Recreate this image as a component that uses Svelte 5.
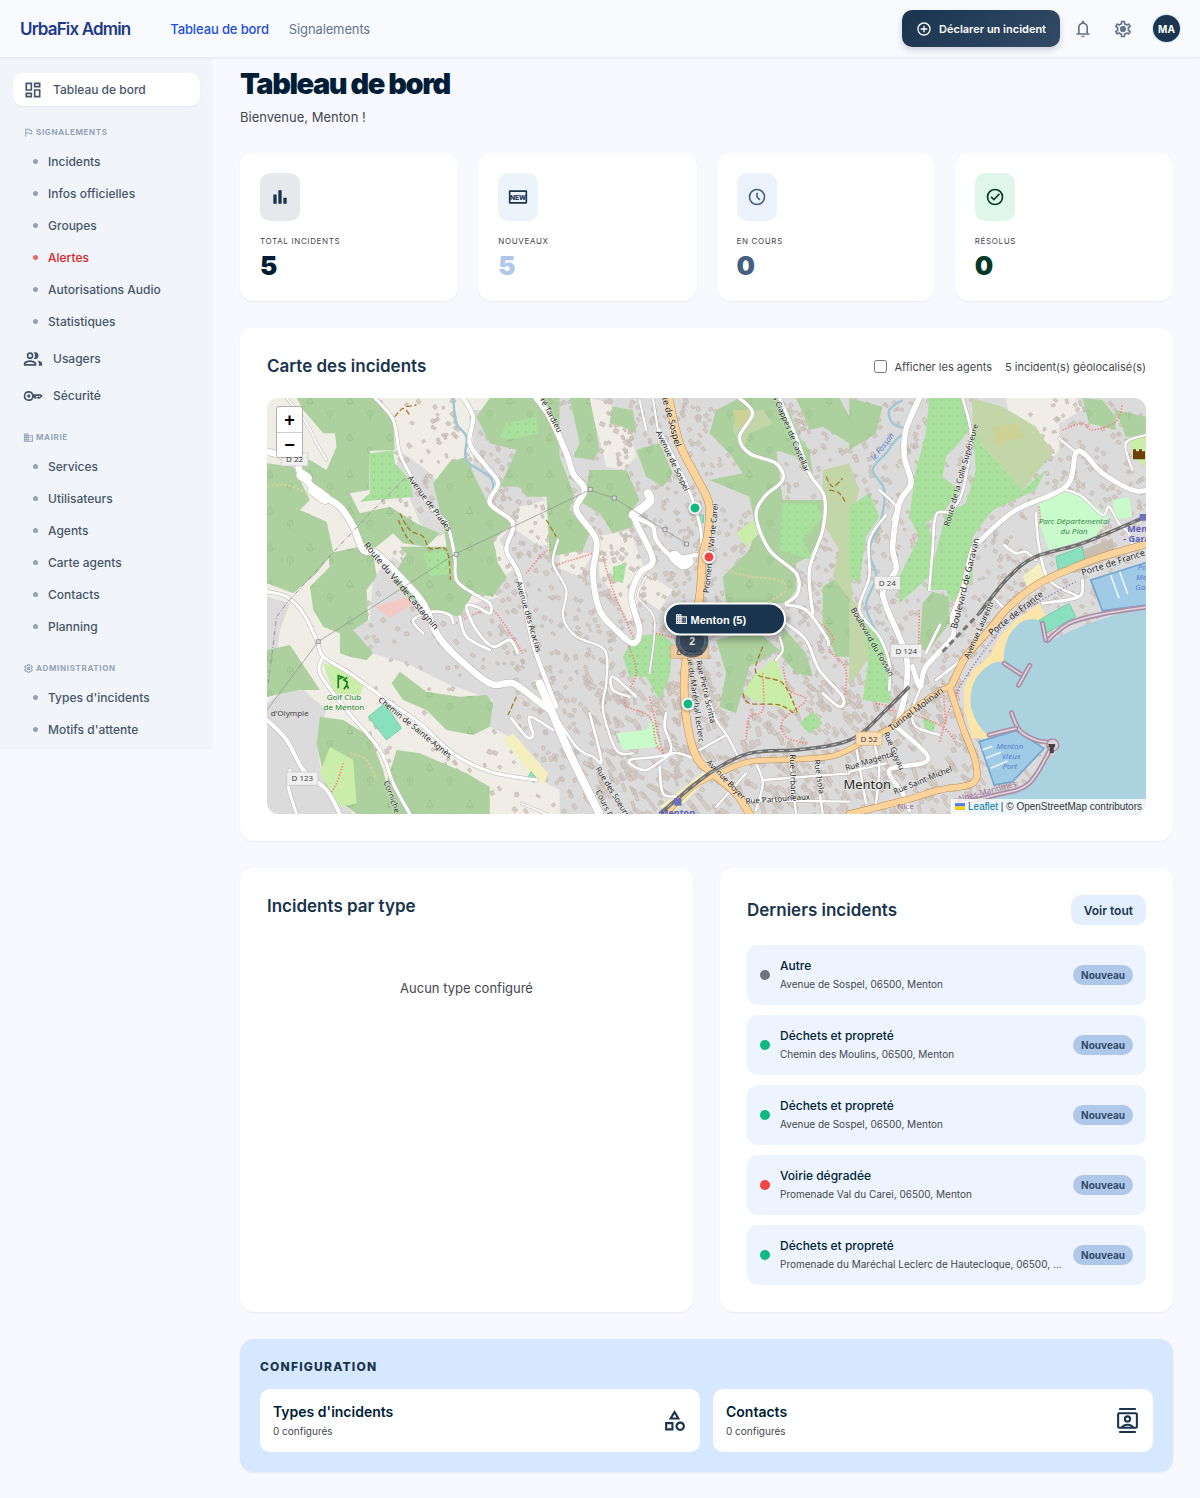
<script>
  const icons = {
    dashboard: 'M19 5v2h-4V5h4M9 5v6H5V5h4m10 8v6h-4v-6h4M9 17v2H5v-2h4M21 3h-8v6h8V3zM11 3H3v10h8V3zm10 8h-8v10h8V11zm-10 4H3v6h8v-6z',
    flag: 'M12.36 6l.4 2H18v6h-3.36l-.4-2H7V6h5.36M14 4H5v17h2v-7h5.6l.4 2h7V6h-5.6L14 4z',
    group: 'M8.500 13.500c-2.500 0-7.500 1.300-7.500 4V20h15v-2.500c0-2.700-5-4-7.500-4zM3 18c.2-1.200 3-2.500 5.500-2.500S13.800 16.800 14 18zM8.500 12a4 4 0 1 0 0-8 4 4 0 0 0 0 8zm0-6a2 2 0 1 1 0 4 2 2 0 0 1 0-4zM16.700 13.800c1.300.9 2.300 2.200 2.300 3.700V20h4v-2.500c0-2.200-3.500-3.400-6.300-3.700zM14.500 12a4 4 0 1 0 0-8c-.5 0-1 .1-1.500.3.900 1 1.400 2.300 1.400 3.700s-.5 2.700-1.400 3.700c.5.200 1 .3 1.500.3z',
    key: 'M7 6a6 6 0 1 0 5.600 8H13l1.600 1.600L16.500 14l2 1.700L20.500 15 23.600 12 21.500 10h-8.900A6 6 0 0 0 7 6zm0 2c1.900 0 3.500 1.300 3.900 4h9.900l.3.100-1.300 1.300-1.300-1.200-2 1.500-1.500-1.700h-4.100A4 4 0 1 1 7 8zm0 2a2 2 0 1 0 0 4 2 2 0 0 0 0-4z',
    building: 'M12 7V3H2v18h20V7H12zM6 19H4v-2h2v2zm0-4H4v-2h2v2zm0-4H4V9h2v2zm0-4H4V5h2v2zm4 12H8v-2h2v2zm0-4H8v-2h2v2zm0-4H8V9h2v2zm0-4H8V5h2v2zm10 12h-8v-2h2v-2h-2v-2h2v-2h-2V9h8v10zm-2-8h-2v2h2v-2zm0 4h-2v2h2v-2z',
    gear: 'M19.43 12.98c.04-.32.07-.64.07-.98 0-.34-.03-.66-.07-.98l2.11-1.65c.19-.15.24-.42.12-.64l-2-3.46c-.09-.16-.26-.25-.44-.25-.06 0-.12.01-.17.03l-2.49 1c-.52-.4-1.08-.73-1.69-.98l-.38-2.65C14.46 2.18 14.25 2 14 2h-4c-.25 0-.46.18-.49.42l-.38 2.65c-.61.25-1.17.59-1.69.98l-2.49-1c-.06-.02-.12-.03-.18-.03-.17 0-.34.09-.43.25l-2 3.46c-.13.22-.07.49.12.64l2.11 1.65c-.04.32-.07.65-.07.98 0 .33.03.66.07.98l-2.11 1.65c-.19.15-.24.42-.12.64l2 3.46c.09.16.26.25.44.25.06 0 .12-.01.17-.03l2.49-1c.52.4 1.08.73 1.69.98l.38 2.65c.03.24.24.42.49.42h4c.25 0 .46-.18.49-.42l.38-2.65c.61-.25 1.17-.59 1.69-.98l2.49 1c.06.02.12.03.18.03.17 0 .34-.09.43-.25l2-3.46c.12-.22.07-.49-.12-.64l-2.11-1.65zm-1.98-1.71c.04.31.05.52.05.73 0 .21-.02.43-.05.73l-.14 1.13.89.7 1.08.84-.7 1.21-1.27-.51-1.04-.42-.9.68c-.43.32-.84.56-1.25.73l-1.06.43-.16 1.13-.2 1.35h-1.4l-.19-1.35-.16-1.13-1.06-.43c-.43-.18-.83-.41-1.23-.71l-.91-.7-1.06.43-1.27.51-.7-1.21 1.08-.84.89-.7-.14-1.13c-.03-.31-.05-.54-.05-.74s.02-.43.05-.73l.14-1.13-.89-.7-1.08-.84.7-1.21 1.27.51 1.04.42.9-.68c.43-.32.84-.56 1.25-.73l1.06-.43.16-1.13.2-1.35h1.39l.19 1.35.16 1.13 1.06.43c.43.18.83.41 1.23.71l.91.7 1.06-.43 1.27-.51.7 1.21-1.07.85-.89.7.14 1.13zM12 8.500a3.500 3.500 0 1 0 0 7 3.500 3.500 0 0 0 0-7z',
    add: 'M13 7h-2v4H7v2h4v4h2v-4h4v-2h-4V7zm-1-5C6.48 2 2 6.48 2 12s4.48 10 10 10 10-4.48 10-10S17.52 2 12 2zm0 18c-4.41 0-8-3.59-8-8s3.59-8 8-8 8 3.59 8 8-3.59 8-8 8z',
    bell: 'M4 19v-2h2v-7q0-2.075 1.25-3.687T10.5 4.2v-.7q0-.625.438-1.062T12 2t1.063.438T13.5 3.5v.7q2 .5 3.25 2.113T18 10v7h2v2zm8 3q-.825 0-1.412-.587T10 20h4q0 .825-.587 1.413T12 22m-4-5h8v-7q0-1.65-1.175-2.825T12 6 9.175 7.175 8 10z',
    bars: 'M4 9h4v11H4zm12 4h4v7h-4zm-6-9h4v16h-4z',
    frame: 'M2 4h20q1 0 1 1v14q0 1-1 1H2q-1 0-1-1V5q0-1 1-1zm1 2v12h18V6z',
    clock: 'M12 2a10 10 0 1 0 0 20 10 10 0 0 0 0-20zm0 2a8 8 0 1 1 0 16 8 8 0 0 1 0-16zm-1 3v5.400l3.800 3.800 1.400-1.400-3.200-3.200V7z',
    check: 'M12 2a10 10 0 1 0 0 20 10 10 0 0 0 0-20zm0 2a8 8 0 1 1 0 16 8 8 0 0 1 0-16zm4.600 3.600L10.600 13.700 8 11.100l-1.400 1.400 4 4L18 9z',
    shapes: 'M12 2l-5.5 9h11L12 2zm0 3.84L13.93 9h-3.87L12 5.84zM17.5 13c-2.49 0-4.5 2.01-4.5 4.5s2.01 4.5 4.5 4.5 4.5-2.01 4.5-4.5-2.01-4.5-4.5-4.5zm0 7c-1.38 0-2.5-1.12-2.5-2.5s1.12-2.5 2.5-2.5 2.5 1.12 2.5 2.5-1.12 2.5-2.5 2.5zM3 21.5h8v-8H3v8zm2-6h4v4H5v-4z',
    contacts: 'M4 0h16v2H4zm0 22h16v2H4zM4 4h16q2 0 2 2v12q0 2-2 2H4q-2 0-2-2V6q0-2 2-2zm0 2v12h1.600q2.400-3 6.400-3t6.400 3H20V6zm4.500 12h7q-1.500-1-3.500-1t-3.500 1zM12 7a3.500 3.500 0 1 1 0 7 3.500 3.500 0 0 1 0-7zm0 2a1.500 1.500 0 1 0 0 3 1.500 1.500 0 0 0 0-3z'
  };

  const signalements = ['Incidents', 'Infos officielles', 'Groupes', 'Alertes', 'Autorisations Audio', 'Statistiques'];
  const mairie = ['Services', 'Utilisateurs', 'Agents', 'Carte agents', 'Contacts', 'Planning'];
  const administration = ["Types d'incidents", "Motifs d'attente"];

  const stats = [
    { label: 'Total incidents', value: 5, icon: 'bars', tone: 'total' },
    { label: 'Nouveaux', value: 5, icon: 'frame', tone: 'fresh' },
    { label: 'En cours', value: 0, icon: 'clock', tone: 'running' },
    { label: 'Résolus', value: 0, icon: 'check', tone: 'solved' }
  ];

  const incidents = [
    { type: 'Autre', place: 'Avenue de Sospel, 06500, Menton', tone: 'grey' },
    { type: 'Déchets et propreté', place: 'Chemin des Moulins, 06500, Menton', tone: 'green' },
    { type: 'Déchets et propreté', place: 'Avenue de Sospel, 06500, Menton', tone: 'green' },
    { type: 'Voirie dégradée', place: 'Promenade Val du Carei, 06500, Menton', tone: 'red' },
    { type: 'Déchets et propreté', place: 'Promenade du Maréchal Leclerc de Hautecloque, 06500, Menton', tone: 'green' }
  ];

  const configs = [
    { title: "Types d'incidents", icon: 'shapes' },
    { title: 'Contacts', icon: 'contacts' }
  ];

  // Map geometry: each entry starts with its column (west, centre, east), followed by points.
  const columns = [0, 870, 1770];
  const parse = (s, col) => s.split(' ').map((p) => {
    const [x, y] = p.split(',').map(Number);
    return [x + columns[col], y];
  });
  const poly = ([col, s]) => 'M' + parse(s, col).map((p) => p.join(' ')).join('L') + 'Z';
  const curve = (col, s) => {
    const p = parse(s, col);
    let d = `M${p[0].join(' ')}`;
    for (let i = 0; i < p.length - 1; i++) {
      const a = p[i - 1] ?? p[i], b = p[i], c = p[i + 1], e = p[i + 2] ?? c;
      d += `C${b[0] + (c[0] - a[0]) / 6} ${b[1] + (c[1] - a[1]) / 6} ${c[0] - (e[0] - b[0]) / 6} ${c[1] - (e[1] - b[1]) / 6} ${c[0]} ${c[1]}`;
    }
    return d;
  };

  let seed = 7;
  const rnd = () => (seed = (seed * 16807) % 2147483647) / 2147483647;
  let buildings = '';
  for (let i = 0; i < 3300; i++) {
    const x = 300 + rnd() * 2360, y = 24 + rnd() * 1248;
    const rural = x < 420 + y * 0.4;
    if (rural && rnd() < 0.7) continue;
    const dense = y > 850 && x > 970;
    const w = (dense ? 12 : 7) + rnd() * (dense ? 24 : 8), h = 6 + rnd() * 7, a = 0.5 + Math.round(rnd() * 2) * 0.4;
    const cx = Math.cos(a) * w, sx = Math.sin(a) * w, cy = -Math.sin(a) * h, sy = Math.cos(a) * h;
    buildings += `M${x.toFixed(0)} ${y.toFixed(0)}l${cx.toFixed(0)} ${sx.toFixed(0)}l${cy.toFixed(0)} ${sy.toFixed(0)}l${(-cx).toFixed(0)} ${(-sx).toFixed(0)}Z`;
  }

  const land = [
    [0, '21,24 900,24 900,460 840,470 760,540 720,620 560,660 440,760 560,880 700,930 690,1010 750,1040 860,1180 900,1200 900,1272 21,1272'],
    [1, '120,24 185,40 180,100 240,120 260,200 220,240 170,230 150,150 130,80'],
    [1, '140,440 240,420 290,550 370,600 330,660 270,620 240,700 200,620 150,560'],
    [1, '0,480 130,490 90,560 20,530'],
    [2, '470,24 680,24 700,60 630,100 630,180 600,220 560,160 480,80']
  ];
  const town = [
    [0, '340,560 400,500 480,560 560,660 600,690 700,700 720,620 690,590 760,540 720,450 760,400 700,400 690,340 620,290 640,230 700,240 720,290 800,290 860,330 780,350 770,420 840,470 900,450 900,1200 870,1180 750,1030 690,1000 700,930 640,900 560,880 520,860 440,820 300,780 280,710 330,690'],
    [0, '430,190 500,240 560,300 590,400 540,440 480,400 440,300 400,240'],
    [0, '21,940 60,910 130,900 200,960 170,1040 180,1130 280,1272 21,1272'],
    [0, '21,620 90,640 60,720 40,860 21,880'],
    [0, '640,60 700,60 690,160 770,180 720,290 640,250']
  ];
  const woods = [
    [0, '110,24 345,24 400,95 405,180 330,182 328,300 270,310 300,370 390,350 470,400 540,430 500,470 430,460 400,430 350,470 300,490 320,470 280,410 240,350 180,320 130,240 60,200 150,210 200,240 230,170 225,130 190,130 130,60'],
    [0, '21,220 100,230 120,270 150,330 120,360 200,395 220,485 170,550 100,610 21,580'],
    [0, '205,490 300,470 340,490 350,560 320,600 325,690 280,720 340,790 320,810 270,800 240,790 240,730 190,710 160,660 150,590 210,530'],
    [0, '21,780 90,765 180,900 120,900 21,920'],
    [0, '570,215 620,200 640,250 690,350 760,400 700,450 715,520 740,560 700,620 640,610 600,680 500,660 430,610 400,560 440,490 420,470 560,470 550,400 520,280'],
    [0, '690,24 900,24 900,320 800,320 780,290 720,290 770,180 690,160 650,80'],
    [0, '420,845 500,905 600,920 680,915 700,940 690,1010 640,1035 560,1020 500,960 430,930 395,880'],
    [0, '410,1080 480,1090 620,1150 690,1190 690,1272 400,1272 380,1180'],
    [0, '180,980 250,990 330,1040 370,1140 400,1272 290,1272 200,1200 170,1060'],
    [1, '60,24 120,24 140,120 150,180 130,210 70,200 90,160'],
    [1, '190,50 250,60 260,130 220,110 180,100'],
    [1, '-20,120 30,200 75,320 60,360 120,430 100,480 0,500'],
    [1, '120,240 230,240 270,330 240,370 250,410 190,430 150,370 100,340'],
    [1, '260,180 330,160 370,250 340,290 290,260'],
    [1, '500,60 570,24 690,24 720,70 740,140 780,180 790,250 780,260 740,200 680,180 700,330 820,330 820,420 780,500 740,520 740,600 710,640 620,640 530,640 520,560 600,480 620,420 600,320 480,270 580,250 540,190 480,130'],
    [1, '740,24 870,24 910,100 900,160 820,110 780,120 760,70'],
    [1, '820,590 870,560 910,640 900,800 860,800 820,700'],
    [1, '500,750 620,720 690,780 600,830 560,970 510,950 530,850'],
    [1, '700,710 770,790 790,860 740,850 690,790'],
    [2, '0,24 100,50 80,130 0,180'],
    [2, '220,640 250,605 300,620 300,700 240,780 210,780'],
    [2, '700,24 760,30 800,80 800,120 720,100'],
    [2, '800,60 890,80 890,140 830,140']
  ];
  const scrub = [
    [1, '560,70 640,60 670,100 600,130 580,180 550,120'],
    [1, '820,240 900,220 930,300 900,420 910,640 850,560 870,480 820,400'],
    [2, '370,24 460,50 560,110 610,190 520,300 400,170 370,110'],
    [2, '0,620 30,650 60,800 20,860 0,880']
  ];
  const meadow = [
    [2, '430,110 500,100 530,140 440,165'],
    [1, '550,60 600,60 600,110 560,110']
  ];
  const orchard = [
    [0, '330,190 400,180 405,220 450,270 460,320 300,335 330,310'],
    [0, '490,490 560,480 575,550 510,560'],
    [0, '740,100 830,80 835,130 740,150 720,140'],
    [1, '220,800 250,740 330,730 370,760 360,860 330,930 290,860 240,860'],
    [1, '700,340 800,340 820,380 760,450 790,510 690,480'],
    [1, '690,80 720,60 750,140 780,180 720,150'],
    [1, '750,1000 790,965 820,1000 780,1030'],
    [1, '190,530 230,520 220,580 190,570'],
    [2, '240,24 340,24 360,120 320,170 290,200 280,260 330,300 280,370 230,400 250,440 240,560 150,640 150,560 210,440 180,380 200,240 230,130'],
    [2, '370,110 400,170 520,300 590,240 560,300 430,360 370,440 370,570 310,640 290,600 230,600 270,450 290,370 350,340 380,240'],
    [2, '0,350 60,310 90,380 50,440 30,580 0,560'],
    [2, '30,660 90,740 130,860 120,940 40,930 60,800'],
    [2, '220,980 260,1000 250,1030 225,1010']
  ];
  const parks = [
    [2, '570,340 660,300 720,330 780,380 740,440 600,480 570,400'],
    [2, '790,330 840,320 850,380 800,390'],
    [1, '200,1030 290,1020 310,980 330,1070 220,1080']
  ];
  const gardens = [
    [0, '190,820 270,840 310,890 300,915 220,910'],
    [0, '210,1070 280,1110 290,1240 240,1250 180,1150'],
    [1, '620,850 680,800 700,860 750,970 610,930 580,910'],
    [1, '560,430 610,390 630,430 590,470'],
    [2, '840,150 890,140 890,230 850,200']
  ];
  const pitches = [
    [0, '375,940 425,1015 380,1050 325,980'],
    [0, '815,1145 830,1165 822,1178 805,1160'],
    [1, '450,375 462,375 462,398 450,398'],
    [2, '620,500 700,470 710,530 630,560'],
    [2, '570,690 660,640 680,680 590,730']
  ];
  const schools = [
    [0, '730,1050 760,1030 865,1150 855,1180 830,1170'],
    [0, '825,870 862,865 872,920 845,928'],
    [1, '330,1250 470,1140 490,1150 370,1272'],
    [2, '520,560 570,520 600,560 540,600']
  ];
  const sand = [[2, '570,640 500,690 450,740 420,800 370,840 345,890 345,960 370,1045 420,1045 410,1000 400,900 480,830 480,750 520,700 600,700']];
  const sea = 'M2700 648C2560 665 2430 720 2365 758Q2350 730 2345 692Q2290 672 2250 735Q2230 780 2234 815Q2190 810 2150 865Q2130 900 2135 950Q2150 1010 2190 1038L2270 1018L2330 1052L2385 1060L2395 1080L2300 1190L2120 1240V1290H2700Z';

  const streams = [
    curve(0, '580,24 590,100 620,140 620,210 690,260 700,300 690,340 755,390'),
    curve(2, '160,30 120,60 130,100 170,120 140,150 110,190 70,240 105,300 95,390 60,480 80,560 50,650 90,740')
  ];
  const roads = [
    [6, 0, '80,24 140,100 170,160 200,210'],
    [20, 0, '21,185 60,195 110,220 125,255 180,310 240,350 280,410 310,480 350,490 430,570 490,640 530,730 580,790 690,880 760,880 830,930 870,960'],
    [32, 0, '125,255 140,265'],
    [34, 0, '160,300 195,325'],
    [9, 0, '345,24 400,90 420,190 455,260 510,350 560,400 585,500 590,570 640,610 690,640 690,670 650,650 620,650 650,720 700,770 750,750 775,790'],
    [13, 0, '610,24 640,80 630,160 680,230 715,280 690,340 760,400 740,480 780,560 820,760 890,950'],
    [10, 0, '21,605 80,620 130,670 170,750 190,800 270,850 380,930 480,1000 580,1090 690,1145 830,1170'],
    [10, 0, '190,800 180,850 260,960 360,1080 400,1180 450,1272'],
    [12, 0, '21,990 80,1050 130,1140 200,1200 240,1272'],
    [9, 0, '90,1140 85,1190 110,1272'],
    [8, 0, '490,730 460,690 520,665 570,675 580,700'],
    [9, 0, '600,680 620,740 690,780'],
    [9, 0, '755,985 800,1040 820,1035 810,980 880,1020'],
    [6, 0, '785,1240 860,1272'],
    [18, 1, '-40,24 0,80 50,190 70,250 105,300 80,360 140,450 130,550 150,660 200,720 250,760 270,720 245,620 270,550 310,510 265,410 250,375'],
    [26, 1, '250,375 300,335 295,310'],
    [13, 1, '265,385 310,410 320,450 370,500 440,495'],
    [36, 1, '375,500 400,520 415,515'],
    [7, 1, '25,450 10,520 50,600 40,680 80,740 165,780 170,880 160,960 200,1080 250,1090'],
    [6, 1, '270,30 290,120'],
    [6, 1, '310,24 325,120'],
    [5, 1, '290,560 265,620 315,690 300,850'],
    [9, 1, '330,120 410,280 450,400 458,480'],
    [10, 1, '570,24 610,70 570,140 600,190 680,220 700,270 645,320 620,380 660,480 740,550 745,610 710,640'],
    [10, 1, '690,24 740,140 780,250 825,320 820,420 780,540 790,670'],
    [9, 1, '710,645 770,660 830,740 838,765'],
    [9, 1, '710,700 770,750 810,840 880,920 870,950 820,910'],
    [7, 1, '690,740 700,780 680,810'],
    [24, 1, '-30,880 0,950 60,1090 150,1272'],
    [8, 1, '0,950 80,1070 130,1100 155,1110 120,970'],
    [8, 1, '260,920 190,860 190,900 240,920'],
    [8, 1, '350,970 345,1010 360,1090 240,1110 290,1140 370,1090 430,1105'],
    [8, 1, '330,1130 340,1210 380,1220'],
    [7, 1, '470,900 500,990 535,1040 565,1100'],
    [7, 1, '450,1080 530,1035'],
    [7, 1, '620,1120 640,1180 620,1260'],
    [7, 1, '720,1100 740,1272'],
    [7, 1, '795,1100 820,1272'],
    [7, 1, '600,1230 900,1235'],
    [7, 1, '500,1250 590,1150'],
    [7, 1, '640,1170 900,1150'],
    [17, 2, '210,24 170,120 165,200 185,280 150,340 130,470 140,540 100,610 150,740 172,800 170,900 145,1000'],
    [15, 2, '190,830 212,890 230,830 310,740 310,680 340,600 370,480 400,445 500,360 650,290 680,190 710,195 760,250 850,300 900,300'],
    [8, 2, '340,24 365,130 350,260 330,330 300,365 260,375 250,480 240,600'],
    [8, 2, '90,300 140,350 130,390'],
    [8, 2, '110,375 60,450 60,560 30,660 90,740 120,820 120,900'],
    [7, 2, '650,300 700,320 760,375 780,350 810,400 840,430 850,470'],
    [8, 2, '560,370 570,470 600,570 690,620'],
    [8, 2, '465,465 500,490 530,485 560,510'],
    [8, 2, '430,620 470,660'],
    [8, 2, '260,870 350,800'],
    [8, 2, '272,705 230,790'],
    [7, 2, '215,890 190,960 200,1010 270,1035'],
    [13, 2, '140,1010 230,1090 220,1120 120,1140 160,1210 180,1260'],
    [7, 2, '20,1070 50,1240'],
    [7, 2, '75,1060 90,1140 80,1240'],
    [7, 2, '0,1145 110,1120'],
    [9, 2, '580,640 690,620 700,570'],
    [7, 2, '630,145 685,190'],
    [7, 2, '890,135 830,160 850,240']
  ].map(([w, c, s]) => ({ w, d: curve(c, s) }));
  const mains = [
    [22, 1, '358,24 390,160 440,260 478,340 475,430 460,500 450,620 425,740 405,850 410,980 440,1100 490,1150 560,1210 600,1272'],
    [15, 1, '350,1272 430,1190 520,1145 600,1115 730,1108 850,1098 930,1062 1020,1015 1090,960 1170,905 1210,885'],
    [20, 2, '310,880 350,800 420,720 480,650 570,580 680,530 760,500 900,460'],
    [18, 2, '300,890 340,1010 380,1120 370,1180 270,1200 170,1230 0,1272']
  ].map(([w, c, s]) => ({ w, d: curve(c, s) }));
  const rails = [
    curve(1, '330,1272 480,1150 600,1090 740,1080 850,1065 930,1035 1010,960 1080,890'),
    curve(2, '390,670 480,560 560,500 700,460 890,380')
  ];
  const footways = [
    [1, '20,525 130,490'], [1, '235,760 260,850 225,940 300,980 320,1060 350,1100'],
    [1, '160,500 190,600 250,740'], [1, '640,850 640,960 600,980 590,1050'], [1, '700,830 720,900 770,930 700,990 710,1040 770,1060'],
    [1, '790,680 850,740 840,780 890,840 880,960'], [0, '590,700 650,670 700,660 790,790'], [0, '800,550 850,490 870,480'],
    [2, '640,120 700,100 730,120 800,95 820,45'], [2, '210,660 208,780'], [2, '120,960 180,970 280,1010 320,1060'], [2, '570,350 575,400'],
    [0, '250,1120 230,1180 205,1220'], [2, '80,940 130,950'], [1, '320,730 380,745'], [2, '330,900 300,960 270,1060'],
    [2, '280,880 290,1000'], [1, '300,920 340,1090']
  ].map(([c, s]) => curve(c, s));
  const tracks = [
    [0, '405,80 430,55 450,75'], [0, '440,50 470,45'], [0, '420,370 450,420 490,440 510,475 560,480 572,570'], [0, '415,390 440,440 465,465'],
    [1, '580,910 600,940 690,945 740,975'], [1, '640,770 620,850 700,880 745,970'], [1, '830,260 850,290 880,265'], [1, '840,300 870,310 890,340'], [0, '770,920 745,975'], [0, '860,390 890,440']
  ].map(([c, s]) => curve(c, s));
  const piers = [
    curve(2, '900,650 760,672 660,700 595,752'),
    curve(2, '465,820 520,856'),
    curve(2, '542,826 508,886'),
    curve(2, '487,968 512,1022 560,1050 610,1058'),
    curve(2, '612,1062 540,1180 440,1215 330,1240'),
    curve(2, '590,750 580,700'),
    curve(2, '420,1035 500,1015')
  ];

  // column, x, y, rotation, text
  const labels = [
    [0, 510, 340, 53, 'Avenue de Prades'],
    [0, 424, 588, 50, 'Route du Val de Castagnin', 'l'],
    [0, 808, 680, 74, 'Avenue des Acacias'],
    [0, 466, 1012, 39, 'Chemin de Sainte-Agnès'],
    [0, 400, 1230, 70, 'Corniche d'],
    [0, 875, 75, 62, 'ré Tardieu'],
    [1, 366, 95, 75, 'te de Sospel', 'l'],
    [1, 370, 212, 64, 'Avenue de Sospel'],
    [1, 724, 125, 67, 'es Ciappes de Castellar'],
    [1, 483, 475, -84, 'Promenade Val de Carei'],
    [1, 438, 920, 82, 'Rue du Maréchal Leclerc'],
    [1, 470, 905, 77, 'Rue Pietra Scritta'],
    [1, 530, 1168, 46, 'Avenue Boyer'],
    [1, 190, 1205, 58, 'Rue des Soeurs'],
    [1, 165, 1240, 64, 'Cours R'],
    [1, 732, 1160, 88, 'Rue Urbana'],
    [1, 810, 1160, 82, 'Rue Isola'],
    [1, 685, 1226, -4, 'Rue Partouneaux'],
    [2, 335, 255, -74, 'Route de la Colle Supérieure'],
    [2, 348, 580, -76, 'Boulevard de Garavan', 'l'],
    [2, 388, 720, -66, 'Avenue Laurenti'],
    [2, 500, 670, -38, 'Porte de France', 'l'],
    [2, 792, 518, -18, 'Porte de France', 'l'],
    [2, 70, 755, 60, 'Boulevard du Fossan'],
    [2, 200, 958, -37, 'Tunnel Molinari', 'l'],
    [2, 135, 1082, 66, 'Rue Guyau'],
    [2, 60, 1112, -17, 'Rue Magenta'],
    [2, 220, 1170, -22, 'Rue Saint-Michel']
  ];
  const shields = [
    [0, 104, 208, 'D 22', 80], [0, 127, 1166, 'D 123', 94], [2, 114, 579, 'D 24', 78], [2, 171, 783, 'D 124', 94]
  ];
  const markers = [
    { x: 1307, y: 353, tone: 'green' },
    { x: 1350, y: 500, tone: 'red' },
    { x: 1284, y: 943, tone: 'green' }
  ];
  const place = (x, y) => `left:${((x - 21) / 26.4).toFixed(2)}%;top:${((y - 24) / 12.48).toFixed(2)}%`;

  let showAgents = $state(false);
</script>

{#snippet icon(name)}
  <svg class="icon" viewBox="0 0 24 24" aria-hidden="true">
    <path fill-rule="evenodd" d={icons[name]} />
    {#if name === 'gear'}<circle cx="12" cy="12" r="3.500" opacity="0.800" />{/if}
    {#if name === 'frame'}<text class="new" x="12" y="15" text-anchor="middle">NEW</text>{/if}
  </svg>
{/snippet}

{#snippet group(title, iconName, items)}
  <section class="group">
    <h2>{@render icon(iconName)}{title}</h2>
    <ul>
      {#each items as item}
        <li><a href="#top" class:alert={item === 'Alertes'}>{item}</a></li>
      {/each}
    </ul>
  </section>
{/snippet}

<header class="topbar">
  <a class="brand" href="#top">UrbaFix Admin</a>
  <nav>
    <a class="current" href="#top">Tableau de bord</a>
    <a href="#top">Signalements</a>
  </nav>
  <button class="declare">{@render icon('add')}Déclarer un incident</button>
  <button class="tool" aria-label="Notifications">{@render icon('bell')}</button>
  <button class="tool" aria-label="Paramètres">{@render icon('gear')}</button>
  <button class="avatar" aria-label="Compte MA">MA</button>
</header>

<div class="shell" id="top">
  <aside>
    <a class="entry active" href="#top">{@render icon('dashboard')}Tableau de bord</a>
    {@render group('Signalements', 'flag', signalements)}
    <div class="entries">
      <a class="entry" href="#top">{@render icon('group')}Usagers</a>
      <a class="entry" href="#top">{@render icon('key')}Sécurité</a>
    </div>
    {@render group('Mairie', 'building', mairie)}
    {@render group('Administration', 'gear', administration)}
  </aside>

  <main>
    <div class="intro">
      <h1>Tableau de bord</h1>
      <p>Bienvenue, Menton !</p>
    </div>

    <div class="stats">
      {#each stats as stat}
        <article class="card stat {stat.tone}">
          <span class="badge">{@render icon(stat.icon)}</span>
          <p>{stat.label}</p>
          <strong>{stat.value}</strong>
        </article>
      {/each}
    </div>

    <section class="card panel">
      <div class="panel-head">
        <h2>Carte des incidents</h2>
        <div class="map-tools">
          <label><input type="checkbox" bind:checked={showAgents} />Afficher les agents</label>
          <span>5 incident(s) géolocalisé(s)</span>
        </div>
      </div>

      <div class="map">
        <svg class="tiles" viewBox="21 24 2640 1248" preserveAspectRatio="none" role="img" aria-label="Carte de Menton">
          <defs>
            <pattern id="trees" width="120" height="110" patternUnits="userSpaceOnUse">
              <path d="M30 20l-9 20h18zM30 40v8M86 78a8 9 0 1 1 8 0M90 68v20" fill="none" stroke="#8fb981" stroke-width="2" />
            </pattern>
            <pattern id="dots" width="24" height="24" patternUnits="userSpaceOnUse">
              <circle cx="6" cy="6" r="2" fill="#77bd6d" /><circle cx="18" cy="18" r="1" fill="#77bd6d" />
            </pattern>
          </defs>
          <rect x="0" y="0" width="2700" height="1300" fill="#dcdbdb" />
          {#each land as p}<path d={poly(p)} fill="#f0ede6" />{/each}
          {#each town as p}<path d={poly(p)} fill="#dcdbdb" />{/each}
          <path d={buildings} fill="#d5ccc6" stroke="#c0b5ae" stroke-width="2" />
          {#each woods as p}<path d={poly(p)} fill="#add19e" /><path d={poly(p)} fill="url(#trees)" />{/each}
          {#each scrub as p}<path d={poly(p)} fill="#c3d6a7" />{/each}
          {#each meadow as p}<path d={poly(p)} fill="#cdd196" />{/each}
          {#each orchard as p}<path d={poly(p)} fill="#aae09d" /><path d={poly(p)} fill="url(#dots)" />{/each}
          {#each parks as p}<path d={poly(p)} fill="#c8facc" />{/each}
          {#each gardens as p}<path d={poly(p)} fill="#cbedaa" />{/each}
          {#each schools as p}<path d={poly(p)} fill="#f3efbf" />{/each}
          <path d="M345 650L440 620L460 640L390 685Z" fill="#f3c9c6" />
          <path d="M2470 480L2560 445L2570 500L2485 530Z" fill="#c8beb2" />
          {#each sand as p}<path d={poly(p)} fill="#fbe5a8" />{/each}
          <path d={sea} fill="#aad3df" />
          <path d="M2160 1055L2270 1022L2355 1075L2260 1175L2205 1185Z" fill="#9fcbe6" stroke="#74a5cf" stroke-width="5" />
          <path d="M2495 570L2670 515V645L2530 662Z" fill="#9fcbe6" stroke="#74a5cf" stroke-width="5" />
          <path d="M2555 555L2580 625M2582 545L2606 612M2170 1080l30 -12M2180 1105l45 -18M2195 1135l50 -22" stroke="#eef3f6" stroke-width="5" />
          {#each pitches as p}<path d={poly(p)} fill="#88e0be" stroke="#63c29c" stroke-width="2" />{/each}
          {#each streams as d}<path {d} fill="none" stroke="#9cc7d6" stroke-width="7" />{/each}
          <path d={curve(0, '21,290 80,285 140,310')} class="path-yellow" />
          <path d={curve(1, '530,540 600,560 690,570 710,600 650,640')} class="path-yellow" />
          <path d={curve(0, '270,1090 320,1110 350,1170')} class="path-yellow" />
          {#each footways as d}<path {d} class="footway" />{/each}
          {#each tracks as d}<path {d} class="track" />{/each}
          {#each roads as r}<path d={r.d} class="line" stroke="#b9b4b1" stroke-width={r.w + 3} />{/each}
          {#each roads as r}<path d={r.d} class="line" stroke="#fff" stroke-width={r.w} />{/each}
          {#each mains as r}<path d={r.d} class="line" stroke="#b98a4c" stroke-width={r.w + 3} />{/each}
          {#each mains as r}<path d={r.d} class="line" stroke="#fbd39b" stroke-width={r.w} />{/each}
          {#each rails as d}
            <path {d} class="rail" />
            <path {d} class="ties" />
          {/each}
          <path d="M2050 785L2160 670" class="tunnel" />
          <path d={curve(2, '320,910 370,830 430,750 480,690 560,640 680,575')} class="border" />
          {#each piers as d}<path {d} class="line" stroke="#ab8da8" stroke-width="15" /><path {d} class="line" stroke="#ddd5da" stroke-width="5" />{/each}
          <circle cx="2381" cy="1065" r="18" fill="#ddd5da" stroke="#ab8da8" stroke-width="5" />
          <path d="M2368 1062h20v10h-4v18h-12v-18h-4z" fill="#444" />
          <path d="M21 960L175 755L590 490L870 358L990 300L1065 325L1215 420L1280 460" fill="none" stroke="#8e8e8e" stroke-width="2" />
          <path d="M169 749h12v12h-12zM583 487h12v12h-12zM986 292h12v12h-12zM1058 318h12v12h-12zM1210 413h12v12h-12zM1275 456h12v12h-12z" fill="#ddd" stroke="#777" stroke-width="2" />
          <path d="M25 880L50 680L80 640L180 530L330 370L440 260" fill="none" stroke="#a48ba5" stroke-width="3" stroke-dasharray="14 6 3 6" />
          <path d="M235 895v-38l14 5-14 6M262 862l-10 8 10 6-2 10-8 12M260 884l6 12" fill="none" stroke="#14831d" stroke-width="5" />
          <path d="M2622 178h9v6h9v-6h9v6h9v24h-36z" fill="#6f3f08" />

          {#each labels as [c, x, y, r, t, size]}
            <text class="road {size ?? ''}" transform="translate({x + columns[c]} {y}) rotate({r})" y="9">{t}</text>
          {/each}
          {#each shields as [c, x, y, t, w]}
            <rect x={x + columns[c] - w / 2} y={y - 20} width={w} height="40" rx="3" fill="#efefef" stroke="#c1c1c1" stroke-width="2" />
            <text class="shield" x={x + columns[c]} y={y + 8}>{t}</text>
          {/each}
          <rect x="1790" y="1026" width="78" height="40" rx="3" fill="#fbdcb4" stroke="#d9ac75" stroke-width="2" />
          <text class="shield" x="1829" y="1055">D 52</text>
          <rect x="1233" y="765" width="114" height="40" rx="3" fill="#ecc9a0" stroke="#d9ac75" stroke-width="2" />
          <text class="shield" x="1290" y="795">D 2566</text>
          <text class="golf" x="252" y="930">Golf Club</text>
          <text class="golf" x="252" y="960">de Menton</text>
          <text class="village" x="89" y="977">d'Olympie</text>
          <text class="parc" x="2445" y="401">Parc Départemental</text>
          <text class="parc" x="2445" y="431">du Pian</text>
          <text class="port" x="2252" y="1078">Menton</text>
          <text class="port" x="2256" y="1108">Vieux</text>
          <text class="port" x="2252" y="1138">Port</text>
          <text class="port start" x="2636" y="540">Port</text>
          <text class="port start" x="2631" y="570">Menton</text>
          <text class="port start" x="2629" y="600">Garavan</text>
          <text class="port" transform="translate(1876 175) rotate(-52)">le Fossan</text>
          <text class="station start" x="2605" y="427">Menton</text>
          <text class="station start" x="2593" y="456">- Garavan</text>
          <rect x="2642" y="372" width="20" height="20" fill="#6a6fc0" />
          <rect x="1244" y="1225" width="22" height="22" fill="#6a6fc0" />
          <text class="station" x="1254" y="1278">Menton</text>
          <text class="city" x="1824" y="1196">Menton</text>
          <text class="region" x="1939" y="1258">Nice</text>
          <text class="region" transform="translate(2185 1212) rotate(-15)">Alpes-Maritimes</text>
        </svg>

        <span class="cluster" style={place(1298, 752)}>2</span>
        {#each markers as m}<span class="marker {m.tone}" style={place(m.x, m.y)}></span>{/each}
        <button class="pill" style={place(1395, 688)}>{@render icon('building')}Menton (5)</button>
        <div class="zoom">
          <button aria-label="Zoom avant">+</button>
          <button aria-label="Zoom arrière">−</button>
        </div>
        <div class="credit">
          <svg viewBox="0 0 12 8" aria-hidden="true"><path fill="#4c7be1" d="M0 0h12v4H0z" /><path fill="#ffd500" d="M0 4h12v3H0z" /><path fill="#e0bc00" d="M0 7h12v1H0z" /></svg>
          <a href="#top">Leaflet</a> | © OpenStreetMap contributors
        </div>
      </div>
    </section>

    <div class="pair">
      <section class="card panel">
        <h2>Incidents par type</h2>
        <p class="empty">Aucun type configuré</p>
      </section>

      <section class="card panel">
        <div class="panel-head latest">
          <h2>Derniers incidents</h2>
          <button class="all">Voir tout</button>
        </div>
        <ul class="incidents">
          {#each incidents as incident}
            <li>
              <span class="dot {incident.tone}"></span>
              <div class="what">
                <h3>{incident.type}</h3>
                <p>{incident.place}</p>
              </div>
              <span class="status">Nouveau</span>
            </li>
          {/each}
        </ul>
      </section>
    </div>

    <section class="config">
      <h2>Configuration</h2>
      <div class="config-grid">
        {#each configs as c}
          <a href="#top">
            <div>
              <h3>{c.title}</h3>
              <p>0 configurés</p>
            </div>
            {@render icon(c.icon)}
          </a>
        {/each}
      </div>
    </section>
  </main>
</div>

<style>
  :global(body) {
    background: #f8f9ff;
    color: #43474d;
    font-family: Inter, 'Liberation Sans', sans-serif;
    font-size: 12px;
  }
  * { box-sizing: border-box; }
  h1, h2, h3, p, ul { margin: 0; padding: 0; }
  ul { list-style: none; }
  a { color: inherit; text-decoration: none; }
  button { border: 0; padding: 0; background: none; color: inherit; font: inherit; cursor: pointer; }
  .icon { display: block; flex: none; width: 20px; height: 20px; fill: currentColor; }
  .new { font: 800 8px Inter, sans-serif; }

  .topbar {
    display: flex;
    align-items: center;
    height: 57px;
    padding: 0 20px;
    background: #f9fafe;
    box-shadow: 0 1px 2px rgb(15 23 42 / 8%);
    position: relative;
  }
  .brand { color: #1e3a8a; font-size: 17px; font-weight: 600; letter-spacing: -0.05em; }
  nav { display: flex; flex: 1; gap: 20px; margin-left: 40px; color: #64748b; font-size: 13px; letter-spacing: -0.01em; }
  .current { color: #1d4ed8; font-weight: 500; }
  .declare {
    display: flex;
    align-items: center;
    gap: 7px;
    height: 37px;
    padding: 0 14px;
    border-radius: 10px;
    background: linear-gradient(135deg, #1a344e, #334a66);
    box-shadow: 0 3px 6px rgb(15 23 42 / 18%);
    color: #fff;
    font-size: 11px;
    font-weight: 600;
  }
  .declare .icon { width: 16px; height: 16px; }
  .tool { display: grid; place-items: center; width: 40px; height: 36px; color: #64748b; }
  .tool + .tool { margin-right: 10px; }
  .declare + .tool { margin-left: 3px; }
  .avatar { width: 27px; height: 27px; border-radius: 50%; background: #1d3650; box-shadow: 0 0 0 1px #d5e6fb; color: #fff; font-size: 10px; font-weight: 700; }

  .shell { display: flex; align-items: flex-start; }
  aside { flex: none; width: 213px; padding: 16px 13px 4px; background: #f1f5f9; color: #475569; font-weight: 500; }
  .entry { display: flex; align-items: center; gap: 10px; height: 37px; padding: 0 10px; }
  .entry.active { height: 33px; border-radius: 10px; background: #fff; box-shadow: 0 1px 2px rgb(15 23 42 / 6%); }
  .entries { margin-top: 3px; }
  .group { margin-top: 20px; }
  .entries + .group { margin-top: 17px; }
  .group h2 { display: flex; align-items: center; gap: 2px; height: 12px; margin: 0 0 7px 10px; color: #94a3b8; font-size: 8px; font-weight: 700; letter-spacing: 0.08em; text-transform: uppercase; }
  .group h2 .icon { width: 11px; height: 11px; }
  .group li a { display: flex; align-items: center; gap: 10px; height: 32px; padding-left: 20px; }
  .group li a::before { content: ''; width: 5px; height: 5px; border-radius: 50%; background: #94a3b8; }
  .group li a.alert { color: #dc2626; }
  .group li a.alert::before { background: #ef6464; }

  main { flex: 1; min-width: 0; display: flex; flex-direction: column; gap: 27px; padding: 10px 27px 27px; }
  h1 { color: #001d36; font-size: 29px; font-weight: 900; line-height: 34px; letter-spacing: -0.05em; }
  .intro p { margin-top: 6px; font-size: 13px; line-height: 20px; }
  .intro { margin-bottom: -1px; }
  .card { border-radius: 14px; background: #fff; box-shadow: 0 1px 2px rgb(15 23 42 / 6%); }
  .stats { display: grid; grid-template-columns: repeat(4, 1fr); gap: 20px; }
  .stat { height: 148px; padding: 20px; }
  .badge { display: grid; place-items: center; width: 40px; height: 48px; border-radius: 10px; }
  .stat p { margin-top: 13px; font-size: 8px; line-height: 14px; letter-spacing: 0.08em; text-transform: uppercase; }
  .stat strong { display: block; margin-top: 3px; font-size: 26px; font-weight: 900; line-height: 30px; }
  .total strong { color: #001d36; }
  .total .badge { background: #e6e9eb; color: #1a344e; }
  .fresh strong { color: #afc8ea; }
  .fresh .badge { background: #edf3fb; color: #1a344e; }
  .running strong, .running .badge { color: #466083; }
  .running .badge { background: #ebf2fb; }
  .solved strong, .solved .badge { color: #033a27; }
  .solved .badge { background: #dff7eb; }

  .panel { padding: 27px; }
  .panel h2 { color: #1a344e; font-size: 17px; font-weight: 600; line-height: 23px; }
  .panel-head { display: flex; align-items: center; justify-content: space-between; margin-bottom: 20px; }
  .panel-head.latest { min-height: 30px; }
  .map-tools { display: flex; gap: 13px; font-size: 11px; }
  .map-tools label { display: flex; align-items: center; gap: 7px; }
  .map-tools input { width: 13px; height: 13px; margin: 0; }

  .map { position: relative; height: 416px; overflow: hidden; border-radius: 12px; }
  .tiles { display: block; width: 100%; height: 100%; font-family: 'Noto Sans', sans-serif; }
  .tiles text { text-anchor: middle; font-size: 27px; }
  .tiles text.start { text-anchor: start; }
  .line { fill: none; stroke-linecap: round; stroke-linejoin: round; }
  .footway { fill: none; stroke: #f77f77; stroke-width: 5; stroke-dasharray: 4 5; }
  .track { fill: none; stroke: #a67a2c; stroke-width: 4; stroke-dasharray: 16 7; }
  .border { fill: none; stroke: #8a78b8; stroke-width: 4; stroke-dasharray: 4 6; }
  .path-yellow { fill: none; stroke: #d9cf9c; stroke-width: 6; stroke-dasharray: 8 5; }
  .rail { fill: none; stroke: #707070; stroke-width: 11; }
  .ties { fill: none; stroke: #c9c9c9; stroke-width: 3; stroke-dasharray: 16 16; }
  .tunnel { fill: none; stroke: #777; stroke-width: 9; stroke-dasharray: 18 12; }
  .tiles .road { fill: #222; stroke: #fff; stroke-width: 3; stroke-opacity: 0.6; paint-order: stroke; font-size: 24px; }
  .tiles .road.l { font-size: 27px; }
  .tiles .shield { fill: #444; font-size: 24px; }
  .tiles .golf { fill: #14831d; stroke: #fff; stroke-width: 3; stroke-opacity: 0.6; paint-order: stroke; font-size: 24px; }
  .tiles .village { fill: #444; font-size: 24px; }
  .tiles .parc { fill: #3e8a4c; font-size: 24px; font-style: italic; }
  .tiles .port { fill: #5b7fd0; font-size: 24px; font-style: italic; }
  .tiles .station { fill: #5a5fbd; font-size: 27px; font-weight: 700; }
  .tiles .city { fill: #222; stroke: #fff; stroke-width: 4; stroke-opacity: 0.7; paint-order: stroke; font-size: 39px; }
  .tiles .region { fill: #9a6fa0; font-size: 24px; }

  .marker, .cluster, .pill { position: absolute; transform: translate(-50%, -50%); }
  .marker { width: 13px; height: 13px; border: 2px solid #fff; border-radius: 50%; box-shadow: 0 1px 3px rgb(0 0 0 / 35%); }
  .green { background: #10b981; }
  .red { background: #ef4444; }
  .grey { background: #6b7280; }
  .cluster { display: grid; place-items: center; width: 33px; height: 33px; border: 4px solid rgb(26 52 78 / 70%); border-radius: 50%; background: rgb(26 52 78 / 85%); background-clip: padding-box; color: #fff; font: 700 10px 'Liberation Sans', sans-serif; }
  .pill { display: flex; align-items: center; gap: 3px; width: 122px; height: 33px; padding-left: 9px; border: 2px solid #fff; border-radius: 17px; background: #1a344e; box-shadow: 0 3px 8px rgb(0 0 0 / 40%); color: #fff; font: 700 11px 'Liberation Sans', sans-serif; white-space: nowrap; }
  .pill .icon { width: 13px; height: 13px; }
  .zoom { position: absolute; top: 9px; left: 10px; display: grid; border-radius: 3px; overflow: hidden; box-shadow: 0 0 0 1px rgb(0 0 0 / 25%); }
  .zoom button { width: 25px; height: 25px; background: #fff; color: #000; font: 700 18px/24px 'Liberation Sans', sans-serif; }
  .zoom button + button { border-top: 1px solid #ccc; }
  .credit { position: absolute; right: 0; bottom: 0; padding: 0 4px; background: rgb(255 255 255 / 80%); color: #333; font: 10px/15px 'Liberation Sans', sans-serif; }
  .credit svg { width: 10px; height: 7px; }
  .credit a { color: #0078a8; }

  .pair { display: grid; grid-template-columns: repeat(2, minmax(0, 1fr)); gap: 27px; }
  .empty { margin-top: 60px; font-size: 13px; line-height: 20px; text-align: center; }
  .all { height: 30px; padding: 0 13px; border-radius: 10px; background: #e3eeff; color: #1a344e; font-weight: 600; }
  .incidents { display: grid; gap: 10px; }
  .incidents li { display: flex; align-items: center; gap: 10px; height: 60px; min-width: 0; padding: 0 13px; border-radius: 10px; background: #edf3ff; }
  .dot { flex: none; width: 10px; height: 10px; border-radius: 50%; }
  .what { flex: 1; min-width: 0; }
  .what h3 { color: #001d36; font-size: 12px; font-weight: 500; line-height: 18px; }
  .what p { overflow: hidden; font-size: 10px; line-height: 18px; text-overflow: ellipsis; white-space: nowrap; }
  .status { padding: 0 8px; border-radius: 10px; background: #afc8ea; color: #304a69; font-size: 10px; font-weight: 700; line-height: 20px; }

  .config { padding: 20px; border-radius: 14px; background: #d6e8ff; box-shadow: 0 1px 2px rgb(15 23 42 / 8%); }
  .config h2 { color: #1a344e; font-size: 12px; font-weight: 800; line-height: 16px; letter-spacing: 0.1em; text-transform: uppercase; }
  .config-grid { display: grid; grid-template-columns: 1fr 1fr; gap: 13px; margin-top: 14px; }
  .config-grid a { display: flex; align-items: center; justify-content: space-between; height: 63px; padding: 0 13px; border-radius: 10px; background: #fff; color: #1a344e; }
  .config-grid .icon { width: 25px; height: 25px; }
  .config-grid h3 { color: #001d36; font-size: 14px; font-weight: 600; line-height: 20px; }
  .config-grid p { color: #43474d; font-size: 10px; line-height: 18px; }
</style>
